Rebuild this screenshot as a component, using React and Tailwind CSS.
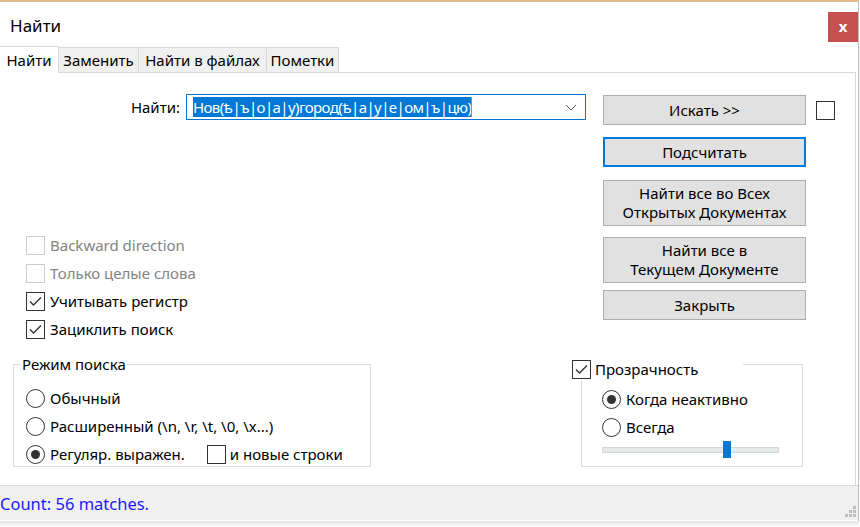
import React from "react";

function Box({ checked, disabled }) {
  return (
    <span
      className={
        disabled
          ? "flex h-[19px] w-[19px] shrink-0 items-center justify-center border border-[#cccccc] bg-white"
          : "flex h-[19px] w-[19px] shrink-0 items-center justify-center border border-[#333333] bg-white"
      }
    >
      {checked && (
        <svg width="17" height="17" viewBox="0 0 17 17">
          <path d="M3 8.5 L6.5 12 L14 4.5" fill="none" stroke="#333333" strokeWidth="1.4" />
        </svg>
      )}
    </span>
  );
}

function Radio({ selected }) {
  return (
    <span className="flex h-[19px] w-[19px] shrink-0 items-center justify-center rounded-full border border-[#333333] bg-white">
      {selected && <span className="h-[9px] w-[9px] rounded-full bg-[#333333]" />}
    </span>
  );
}

function Check({ label, checked, disabled }) {
  return (
    <div className="flex h-[28px] items-center gap-[5px]">
      <Box checked={checked} disabled={disabled} />
      <span className={disabled ? "text-[#838383]" : "text-black"}>{label}</span>
    </div>
  );
}

function RadioRow({ label, selected, children }) {
  return (
    <div className="flex h-[28px] items-center gap-[5px]">
      <Radio selected={selected} />
      <span>{label}</span>
      {children}
    </div>
  );
}

function Btn({ children, h, focused }) {
  return (
    <div
      className={
        (focused
          ? "border-2 border-[#0078d7] "
          : "border border-[#adadad] ") +
        "flex w-[203px] flex-col items-center justify-center bg-[#e1e1e1] text-center leading-[19px] text-black " +
        h
      }
    >
      {children}
    </div>
  );
}

export default function App() {
  return (
    <div className="h-[527px] w-[860px] overflow-hidden bg-white font-['Noto_Sans',sans-serif] text-[15px] text-black">
      <div className="flex h-[521px] w-[859px] flex-col border-r border-t-2 border-r-[#bdbdbd] border-t-[#e3b88c] bg-white">
        {/* title bar */}
        <div className="flex h-[44px] items-start justify-between">
          <div className="pl-[10px] pt-[12px] text-[17px] leading-[24px]">Найти</div>
          <div className="mt-[10px] flex h-[30px] w-[30px] items-center justify-center bg-[#c75050] pb-[2px] text-[15px] font-bold text-white">
            x
          </div>
        </div>
        {/* tabs */}
        <div className="flex h-[26px] items-end text-[15px] leading-[24px]">
          <div className="relative z-10 -mb-px flex h-[27px] w-[59px] items-center justify-center border-r border-t border-[#d9d9d9] bg-white">
            Найти
          </div>
          <div className="flex h-[25px] w-[80px] items-center justify-center border-r border-t border-[#d9d9d9] bg-[#f0f0f0]">
            Заменить
          </div>
          <div className="flex h-[25px] w-[128px] items-center justify-center border-r border-t border-[#d9d9d9] bg-[#f0f0f0]">
            Найти в файлах
          </div>
          <div className="flex h-[25px] w-[72px] items-center justify-center border-r border-t border-[#d9d9d9] bg-[#f0f0f0]">
            Пометки
          </div>
        </div>
        {/* panel */}
        <div className="flex h-[413px] w-[856px] flex-col border-r border-t border-[#d9d9d9] bg-white">
          <div className="flex">
            {/* left column */}
            <div className="flex w-[603px] flex-col">
              <div className="mt-[21px] flex h-[26px] items-center">
                <div className="w-[181px] pr-[1px] pt-[1px] text-right">Найти:</div>
                <div className="ml-[5px] flex h-[26px] w-[400px] items-center border border-[#0078d7] bg-white pl-[6px] pr-[8px]">
                  <span className="bg-[#0078d7] leading-[20px] tracking-[-0.6px] text-white">Нов(ѣ|ъ|о|а|у)город(ѣ|а|у|е|ом|ъ|цю)</span>
                  <span className="h-[20px] w-px bg-[#e07a2c]" />
                  <span className="flex-1" />
                  <svg width="12" height="7" viewBox="0 0 12 7">
                    <path d="M1 1 L6 6 L11 1" fill="none" stroke="#5a5a5a" strokeWidth="1" />
                  </svg>
                </div>
              </div>
              <div className="ml-[26px] mt-[111px] flex flex-col">
                <Check label="Backward direction" disabled />
                <Check label="Только целые слова" disabled />
                <Check label="Учитывать регистр" checked />
                <Check label="Зациклить поиск" checked />
              </div>
            </div>
            {/* buttons */}
            <div className="mt-[22px] flex flex-col">
              <Btn h="h-[30px]">Искать &gt;&gt;</Btn>
              <div className="h-[12px]" />
              <Btn h="h-[30px]" focused>Подсчитать</Btn>
              <div className="h-[13px]" />
              <Btn h="h-[46px]">
                <span>Найти все во Всех</span>
                <span>Открытых Документах</span>
              </Btn>
              <div className="h-[11px]" />
              <Btn h="h-[46px]">
                <span>Найти все в</span>
                <span>Текущем Документе</span>
              </Btn>
              <div className="h-[7px]" />
              <Btn h="h-[30px]">Закрыть</Btn>
            </div>
            <div className="ml-[10px] mt-[28px]">
              <Box />
            </div>
          </div>
          {/* groups */}
          <div className="mt-[21px] flex">
            <div className="relative ml-[13px] h-[103px] w-[358px] border border-[#dcdcdc] pl-[12px] pt-[19px]">
              <div className="absolute left-[7px] top-[-11px] bg-white px-[1px] leading-[20px]">Режим поиска</div>
              <RadioRow label="Обычный" />
              <RadioRow label="Расширенный (\n, \r, \t, \0, \x...)" />
              <RadioRow label="Регуляр. выражен." selected>
                <span className="ml-[17px] flex items-center gap-[4px]">
                  <Box />
                  <span>и новые строки</span>
                </span>
              </RadioRow>
            </div>
            <div className="relative ml-[210px] h-[103px] w-[222px] border border-[#dcdcdc] pl-[20px] pt-[20px]">
              <div className="absolute left-[-10px] top-[-7px] flex h-[22px] w-[171px] items-center gap-[4px] bg-white">
                <Box checked />
                <span>Прозрачность</span>
              </div>
              <RadioRow label="Когда неактивно" selected />
              <RadioRow label="Всегда" />
              <div className="relative flex h-[17px] w-[177px] items-center">
                <div className="h-[6px] w-full border border-[#d6d6d6] bg-[#e7eaea]" />
                <div className="absolute left-[121px] top-0 h-[17px] w-[8px] bg-[#0078d7]" />
              </div>
            </div>
          </div>
        </div>
        {/* status bar */}
        <div className="relative flex h-[35px] items-center border-t border-[#dadada] bg-[#f0f0f0] pt-[3px]">
          <span className="text-[16.5px] text-[#1a1aff]">Count: 56 matches.</span>
          <svg className="absolute bottom-[2px] right-[1px]" width="12" height="12" viewBox="0 0 12 12">
            <rect x="8" y="0" width="3" height="3" fill="#bcbcbc" />
            <rect x="4" y="4" width="3" height="3" fill="#bcbcbc" />
            <rect x="8" y="4" width="3" height="3" fill="#bcbcbc" />
            <rect x="0" y="8" width="3" height="3" fill="#bcbcbc" />
            <rect x="4" y="8" width="3" height="3" fill="#bcbcbc" />
            <rect x="8" y="8" width="3" height="3" fill="#bcbcbc" />
          </svg>
        </div>
      </div>
      <div className="h-[6px] w-[859px] bg-gradient-to-b from-[#e2e2e2] to-white" />
    </div>
  );
}
